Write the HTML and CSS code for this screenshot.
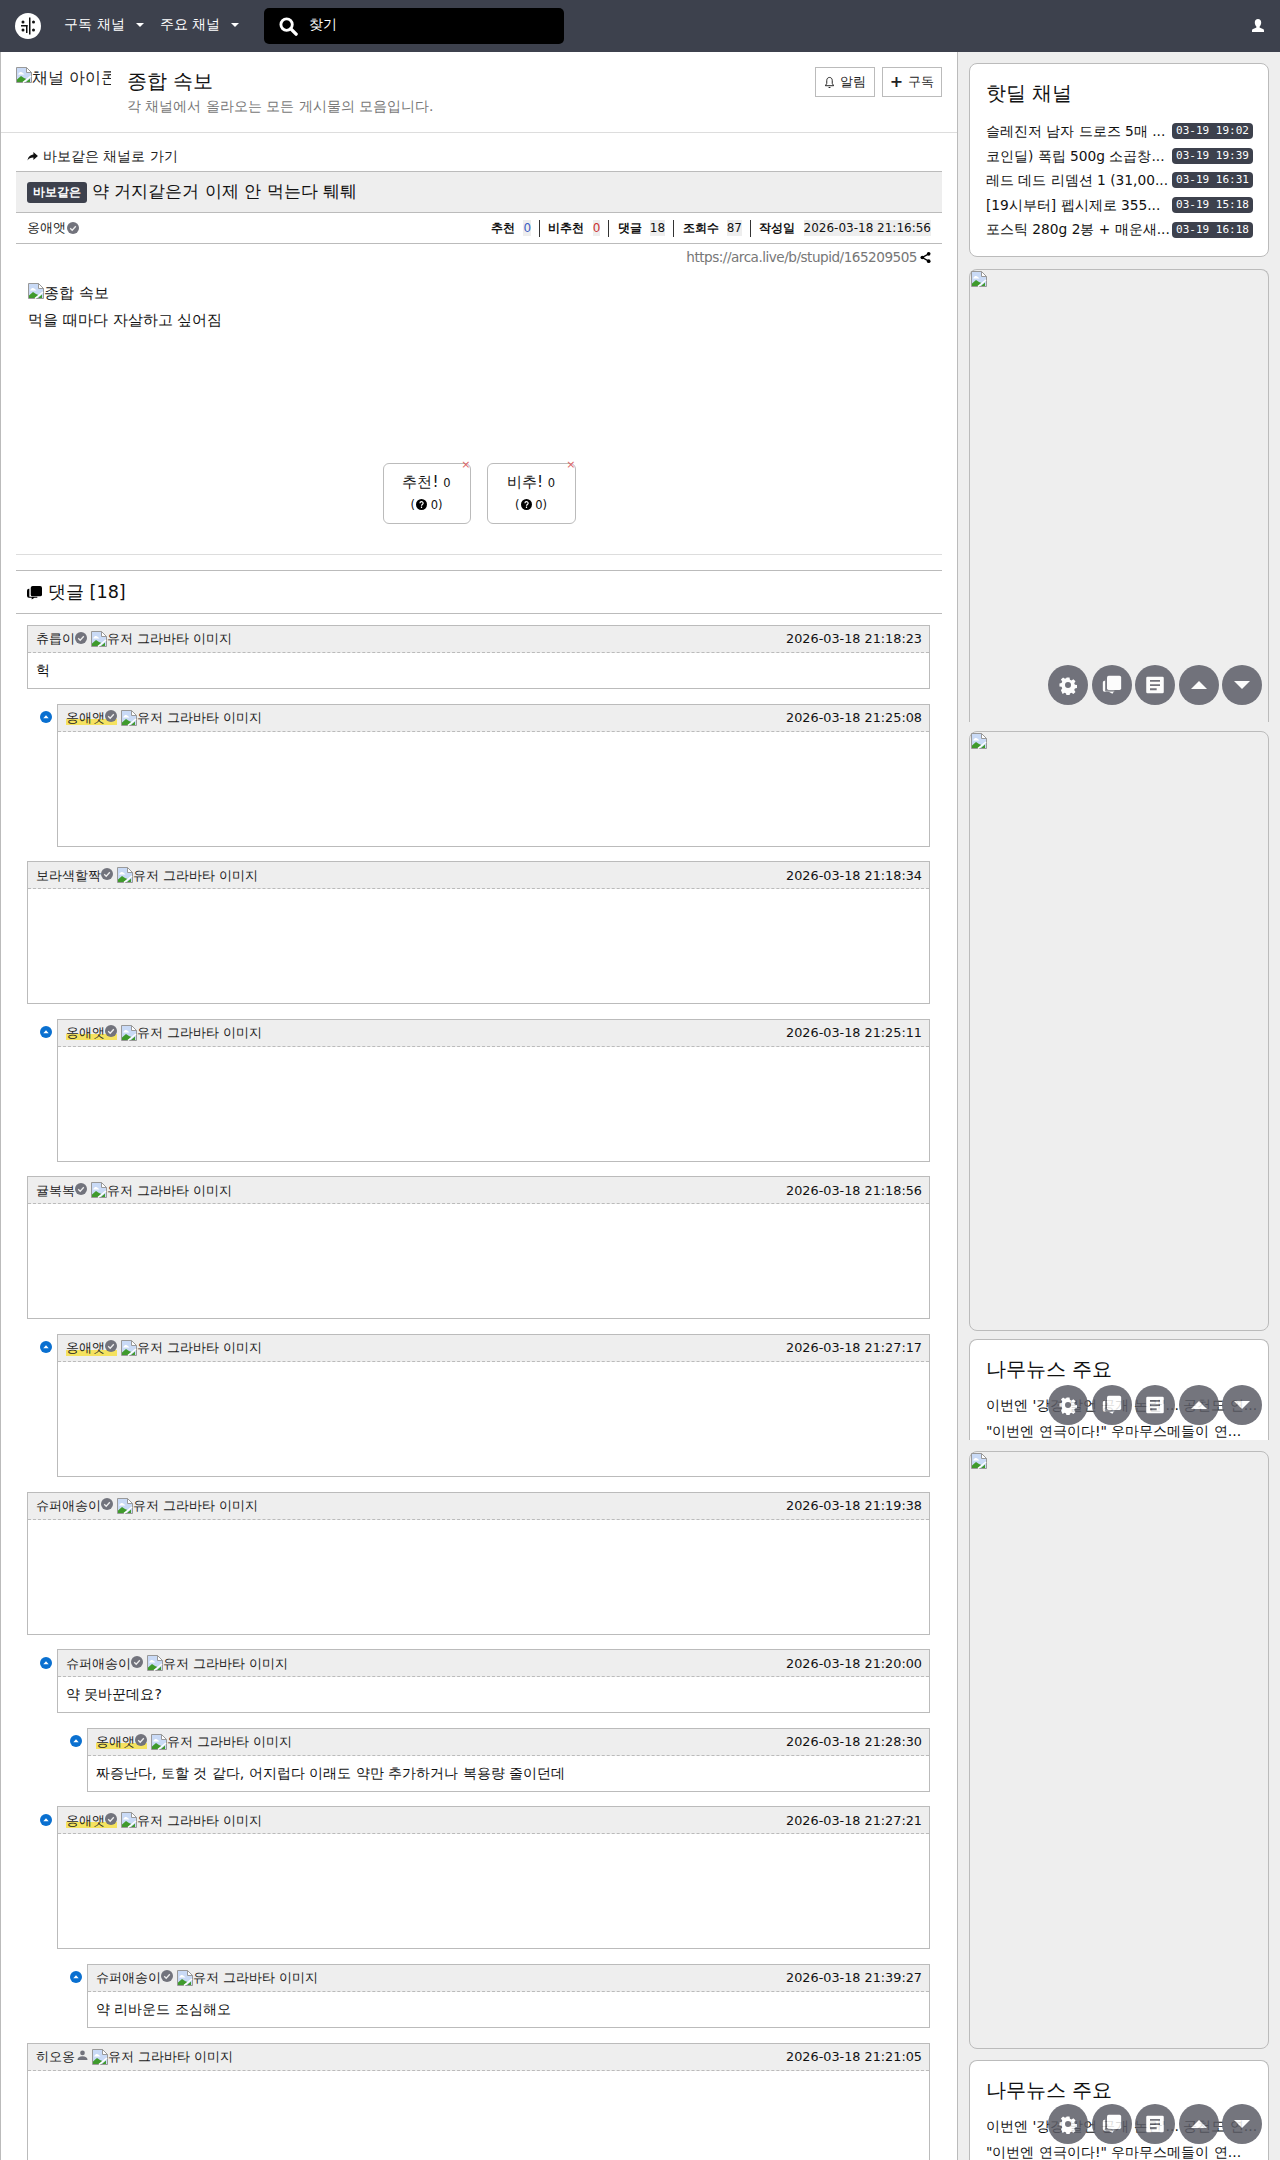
FILE: index.html
```html
<!DOCTYPE html>
<html lang="ko">
<head>
<meta charset="utf-8">
<title>약 거지같은거 이제 안 먹는다 퉤퉤</title>
<link rel="stylesheet" href="styles.css">
</head>
<body>
<svg class="defs" width="0" height="0" aria-hidden="true">
  <symbol id="broken" viewBox="0 0 16 16">
    <path d="M.5.5h10l5 5v10H.5z" fill="#c9daf6" stroke="#999"/>
    <path d="M10.500.5v5h5z" fill="#fff" stroke="#999"/>
    <path d="M2 7.500c1-2 2-2.500 3-2.500s2 1 3.500 2.500z" fill="#fff"/>
    <path d="M1 15V12.500l4-3.500 3 2 2.500 1L7 15z" fill="#3f9a2c"/>
    <path d="M10 15l4-3.500V15z" fill="#3f9a2c"/>
    <path d="M7 15.500l8-6.500" stroke="#fff" stroke-width="1.500"/>
  </symbol>
  <symbol id="check" viewBox="0 0 12 12">
    <circle cx="6" cy="6" r="6" fill="#72737c"/>
    <path d="M3.200 6.200l2 2 3.600-4" fill="none" stroke="#eee" stroke-width="1.300"/>
  </symbol>
  <symbol id="reply" viewBox="0 0 12 12">
    <circle cx="6" cy="6" r="6" fill="#0a70d0"/>
    <path d="M3.300 7.300L6 4.200l2.700 3.100z" fill="#fff"/>
  </symbol>
  <symbol id="gear" viewBox="0 0 24 24">
    <path fill-rule="evenodd" fill="#fff" d="M10 2h4l.6 3 2 .9 2.600-1.700 2.800 2.800-1.700 2.600.9 2 2.800.4v4l-2.800.6-.9 2 1.700 2.600-2.800 2.800-2.600-1.700-2 .9-.6 2.800h-4l-.6-2.800-2-.9-2.600 1.700L2.600 19l1.700-2.600-.9-2L.6 14v-4l2.800-.6.900-2L2.600 4.800 5.400 2l2.600 1.700 2-.9zM12 8a4 4 0 100 8 4 4 0 000-8z" transform="translate(1.200 1.200) scale(.9)"/>
  </symbol>
  <symbol id="chat" viewBox="0 0 24 24">
    <path fill="#fff" d="M8 1h13a2 2 0 012 2v13a2 2 0 01-2 2H8a2 2 0 01-2-2V3a2 2 0 012-2z"/>
    <path fill="#fff" d="M4 7v12h11l-2.500 3.500L8 20H3a2 2 0 01-2-2V9a2 2 0 012-2z"/>
    <path fill="none" stroke="#72737c" d="M4.500 5v14.500H16"/>
  </symbol>
  <symbol id="doc" viewBox="0 0 24 24">
    <path fill="#fff" fill-rule="evenodd" d="M3 2h18a1.500 1.500 0 011.500 1.500v17A1.500 1.500 0 0121 22H3a1.500 1.500 0 01-1.500-1.500v-17A1.500 1.500 0 013 2zm3 4v2.200h12V6zm0 5v2.200h12V11zm0 5v2.200h8V16z"/>
  </symbol>
  <symbol id="help" viewBox="0 0 12 12">
    <circle cx="6" cy="6" r="6"/>
    <path d="M4.300 4.700c0-2.300 3.500-2.300 3.500-.1 0 1.300-1.800 1.300-1.800 2.700M6 8.300v1.500" fill="none" stroke="#fff" stroke-width="1.300"/>
  </symbol>
</svg>

<header class="topbar">
  <a class="logo" aria-label="아카라이브">
    <svg viewBox="0 0 26 26" width="26" height="26">
      <circle cx="13" cy="13" r="13" fill="#fff"/>
      <g fill="#111">
        <rect x="6.500" y="7.500" width="3" height="3" rx="1.500"/>
        <rect x="6.500" y="15.500" width="3" height="3" rx="1.500"/>
        <rect x="17" y="7.500" width="3" height="3" rx="1.500"/>
        <rect x="17" y="15.500" width="3" height="3" rx="1.500"/>
        <rect x="14" y="4.500" width="1.500" height="17"/>
        <rect x="11" y="12" width="1.500" height="8"/>
        <rect x="6" y="12" width="6.500" height="1.500"/>
      </g>
    </svg>
  </a>
  <nav class="topnav">
    <a class="topnav-item">구독 채널<i class="caret"></i></a>
    <a class="topnav-item">주요 채널<i class="caret"></i></a>
  </nav>
  <div class="search">
    <svg viewBox="0 0 20 20" width="19" height="19"><circle cx="8" cy="8" r="6" fill="none" stroke="#fff" stroke-width="3"/><path d="M12.500 12.500l5.500 5.500" stroke="#fff" stroke-width="3.600" stroke-linecap="round"/></svg>
    <span>찾기</span>
  </div>
  <a class="user" aria-label="사용자">
    <svg viewBox="0 0 16 16" width="16" height="16"><path fill="#fff" d="M8 1c2 0 3.200 1.500 3.200 3.500 0 1.700-.7 3.200-1.500 4-.3.400-.2 1 .3 1.200l3 1.300c.8.400 1 1 1 2V14H2v-1c0-1 .2-1.600 1-2l3-1.300c.5-.2.600-.8.300-1.200-.8-.8-1.500-2.300-1.500-4C4.800 2.500 6 1 8 1z"/></svg>
  </a>
</header>

<div class="layout">
  <main class="main">
    <section class="channel">
      <div class="channel-icon"><svg class="bi"><use href="#broken"/></svg>채널 아이콘</div>
      <div class="channel-text">
        <h1>종합 속보</h1>
        <p>각 채널에서 올라오는 모든 게시물의 모음입니다.</p>
      </div>
      <div class="channel-actions">
        <a class="btn"><svg viewBox="0 0 12 14" width="11" height="13"><path fill="none" stroke="#111" d="M6 1.500c-2 0-3 1.500-3 3.500v3l-1.500 2.500h9L9 8V5c0-2-1-3.500-3-3.500z"/><path d="M5 12h2v1H5z" fill="#111"/></svg>알림</a>
        <a class="btn"><span class="plus">+</span>구독</a>
      </div>
    </section>

    <article class="article">
      <a class="back"><svg viewBox="0 0 12 10" width="11" height="9"><path fill="#111" d="M7 0l5 4.500L7 9V6.200C4 6.200 2 7 .5 9.500 1 6 3 3.200 7 2.800z"/></svg>바보같은 채널로 가기</a>
      <div class="title-bar"><span class="badge">바보같은</span><h2>약 거지같은거 이제 안 먹는다 퉤퉤</h2></div>
      <div class="meta">
        <span class="author">옹애앳<svg class="ck"><use href="#check"/></svg></span>
        <div class="stats">
          <b>추천</b><span class="val blue">0</span><i></i>
          <b>비추천</b><span class="val red">0</span><i></i>
          <b>댓글</b><span class="val">18</span><i></i>
          <b>조회수</b><span class="val">87</span><i></i>
          <b>작성일</b><span class="val">2026-03-18 21:16:56</span>
        </div>
      </div>
      <div class="url">https://arca.live/b/stupid/165209505<svg viewBox="0 0 12 12" width="11" height="11"><circle cx="9.500" cy="2" r="2"/><circle cx="9.500" cy="10" r="2"/><circle cx="2.500" cy="6" r="2"/><path d="M9.500 2l-7 4 7 4" fill="none" stroke="#000" stroke-width="1.500"/></svg></div>
      <div class="body">
        <div class="body-img"><svg class="bi"><use href="#broken"/></svg>종합 속보</div>
        <p>먹을 때마다 자살하고 싶어짐</p>
      </div>
      <div class="votes">
        <a class="vote"><span class="vote-x">×</span><span class="vote-main">추천! <small>0</small></span><span class="vote-sub">(<svg class="help"><use href="#help"/></svg> 0)</span></a>
        <a class="vote wide"><span class="vote-x">×</span><span class="vote-main">비추! <small>0</small></span><span class="vote-sub">(<svg class="help"><use href="#help"/></svg> 0)</span></a>
      </div>
      <hr class="rule">
      <h3 class="comments-title"><svg viewBox="0 0 16 16" width="15" height="15"><path d="M6 1h8a2 2 0 012 2v7a2 2 0 01-2 2H6a2 2 0 01-2-2V3a2 2 0 012-2z"/><path d="M2.500 4v8.500H11v1H8l-3 2v-2H2a2 2 0 01-2-2V6a2 2 0 012-2z"/></svg>댓글 [18]</h3>

      <div class="comments">
        <div class="c"><div class="c-box">
          <div class="c-head"><span class="c-name">츄릅이</span><svg class="ck"><use href="#check"/></svg><span class="c-ava"><svg class="bi"><use href="#broken"/></svg>유저 그라바타 이미지</span><time>2026-03-18 21:18:23</time></div>
          <div class="c-text">헉</div></div></div>

        <div class="c d1"><svg class="c-rep"><use href="#reply"/></svg><div class="c-box">
          <div class="c-head"><span class="c-name op">옹애앳<svg class="ck"><use href="#check"/></svg></span><span class="c-ava"><svg class="bi"><use href="#broken"/></svg>유저 그라바타 이미지</span><time>2026-03-18 21:25:08</time></div>
          <div class="c-pic"></div></div></div>

        <div class="c"><div class="c-box">
          <div class="c-head"><span class="c-name">보라색할짝</span><svg class="ck"><use href="#check"/></svg><span class="c-ava"><svg class="bi"><use href="#broken"/></svg>유저 그라바타 이미지</span><time>2026-03-18 21:18:34</time></div>
          <div class="c-pic"></div></div></div>

        <div class="c d1"><svg class="c-rep"><use href="#reply"/></svg><div class="c-box">
          <div class="c-head"><span class="c-name op">옹애앳<svg class="ck"><use href="#check"/></svg></span><span class="c-ava"><svg class="bi"><use href="#broken"/></svg>유저 그라바타 이미지</span><time>2026-03-18 21:25:11</time></div>
          <div class="c-pic"></div></div></div>

        <div class="c"><div class="c-box">
          <div class="c-head"><span class="c-name">귤복복</span><svg class="ck"><use href="#check"/></svg><span class="c-ava"><svg class="bi"><use href="#broken"/></svg>유저 그라바타 이미지</span><time>2026-03-18 21:18:56</time></div>
          <div class="c-pic"></div></div></div>

        <div class="c d1"><svg class="c-rep"><use href="#reply"/></svg><div class="c-box">
          <div class="c-head"><span class="c-name op">옹애앳<svg class="ck"><use href="#check"/></svg></span><span class="c-ava"><svg class="bi"><use href="#broken"/></svg>유저 그라바타 이미지</span><time>2026-03-18 21:27:17</time></div>
          <div class="c-pic"></div></div></div>

        <div class="c"><div class="c-box">
          <div class="c-head"><span class="c-name">슈퍼애송이</span><svg class="ck"><use href="#check"/></svg><span class="c-ava"><svg class="bi"><use href="#broken"/></svg>유저 그라바타 이미지</span><time>2026-03-18 21:19:38</time></div>
          <div class="c-pic"></div></div></div>

        <div class="c d1"><svg class="c-rep"><use href="#reply"/></svg><div class="c-box">
          <div class="c-head"><span class="c-name">슈퍼애송이</span><svg class="ck"><use href="#check"/></svg><span class="c-ava"><svg class="bi"><use href="#broken"/></svg>유저 그라바타 이미지</span><time>2026-03-18 21:20:00</time></div>
          <div class="c-text">약 못바꾼데요?</div></div></div>

        <div class="c d2"><svg class="c-rep"><use href="#reply"/></svg><div class="c-box">
          <div class="c-head"><span class="c-name op">옹애앳<svg class="ck"><use href="#check"/></svg></span><span class="c-ava"><svg class="bi"><use href="#broken"/></svg>유저 그라바타 이미지</span><time>2026-03-18 21:28:30</time></div>
          <div class="c-text">짜증난다, 토할 것 같다, 어지럽다 이래도 약만 추가하거나 복용량 줄이던데</div></div></div>

        <div class="c d1"><svg class="c-rep"><use href="#reply"/></svg><div class="c-box">
          <div class="c-head"><span class="c-name op">옹애앳<svg class="ck"><use href="#check"/></svg></span><span class="c-ava"><svg class="bi"><use href="#broken"/></svg>유저 그라바타 이미지</span><time>2026-03-18 21:27:21</time></div>
          <div class="c-pic"></div></div></div>

        <div class="c d2"><svg class="c-rep"><use href="#reply"/></svg><div class="c-box">
          <div class="c-head"><span class="c-name">슈퍼애송이</span><svg class="ck"><use href="#check"/></svg><span class="c-ava"><svg class="bi"><use href="#broken"/></svg>유저 그라바타 이미지</span><time>2026-03-18 21:39:27</time></div>
          <div class="c-text">약 리바운드 조심해오</div></div></div>

        <div class="c"><div class="c-box">
          <div class="c-head"><span class="c-name">히오옹</span><svg class="person" viewBox="0 0 12 12"><circle cx="6" cy="3.500" r="2.800"/><path d="M0 12c0-3 2.500-4.500 6-4.500s6 1.500 6 4.500z"/></svg><span class="c-ava"><svg class="bi"><use href="#broken"/></svg>유저 그라바타 이미지</span><time>2026-03-18 21:21:05</time></div>
          <div class="c-pic"></div></div></div>
      </div>
    </article>
  </main>

  <aside class="side">
    <section class="card deal">
      <h4>핫딜 채널</h4>
      <ul class="deal-list">
        <li><span>슬레진저 남자 드로즈 5매 ...</span><time>03-19 19:02</time></li>
        <li><span>코인딜) 폭립 500g 소곱창...</span><time>03-19 19:39</time></li>
        <li><span>레드 데드 리뎀션 1 (31,00...</span><time>03-19 16:31</time></li>
        <li><span>[19시부터] 펩시제로 355...</span><time>03-19 15:18</time></li>
        <li><span>포스틱 280g 2봉 + 매운새...</span><time>03-19 16:18</time></li>
      </ul>
    </section>

    <section class="card ad ad-a">
      <svg class="bi"><use href="#broken"/></svg>
      <div class="fab-row fab-a">
        <a class="fab"><svg><use href="#gear"/></svg></a><a class="fab"><svg><use href="#chat"/></svg></a><a class="fab"><svg><use href="#doc"/></svg></a><a class="fab"><i class="tri up"></i></a><a class="fab"><i class="tri down"></i></a>
      </div>
    </section>

    <section class="card ad ad-b"><svg class="bi"><use href="#broken"/></svg></section>

    <section class="card news">
      <h4>나무뉴스 주요</h4>
      <p>이번엔 '강경 발언 공개 논란'... 공천도 연...</p>
      <p>"이번엔 연극이다!" 우마무스메들이 연...</p>
      <div class="fab-row fab-n">
        <a class="fab"><svg><use href="#gear"/></svg></a><a class="fab"><svg><use href="#chat"/></svg></a><a class="fab"><svg><use href="#doc"/></svg></a><a class="fab"><i class="tri up"></i></a><a class="fab"><i class="tri down"></i></a>
      </div>
    </section>

    <section class="card ad ad-b ad-c"><svg class="bi"><use href="#broken"/></svg></section>

    <section class="card news">
      <h4>나무뉴스 주요</h4>
      <p>이번엔 '강경 발언 공개 논란'... 공천도 연...</p>
      <p>"이번엔 연극이다!" 우마무스메들이 연...</p>
      <div class="fab-row fab-l">
        <a class="fab"><svg><use href="#gear"/></svg></a><a class="fab"><svg><use href="#chat"/></svg></a><a class="fab"><svg><use href="#doc"/></svg></a><a class="fab"><i class="tri up"></i></a><a class="fab"><i class="tri down"></i></a>
      </div>
    </section>
  </aside>
</div>
</body>
</html>
```

FILE: styles.css
```css
* { box-sizing: border-box; }
html, body { margin: 0; padding: 0; }
body {
  height: 2160px;
  overflow: hidden;
  background: #eee;
  color: #111;
  font-family: "DejaVu Sans", sans-serif;
  font-size: 14px;
  line-height: 1.5;
}
h1, h2, h3, h4, p, ul { margin: 0; padding: 0; font-weight: 400; }
.defs { position: absolute; }
.bi { width: 16px; height: 16px; flex: none; vertical-align: top; }
.ck { width: 12px; height: 12px; flex: none; margin-bottom: 3px; }

.topbar {
  display: flex;
  align-items: center;
  height: 52px;
  background: #3d414d;
  padding-left: 15px;
  color: #fff;
}
.logo { display: flex; width: 26px; height: 26px; margin-right: 23px; }
.topnav { display: flex; gap: 16px; font-size: 14.400px; padding-bottom: 2px; }
.topnav-item { display: flex; align-items: center; }
.caret {
  margin-left: 11px;
  border-left: 4px solid transparent;
  border-right: 4px solid transparent;
  border-top: 4px solid #fff;
}
.search {
  display: flex;
  align-items: center;
  gap: 11px;
  width: 300px;
  height: 36px;
  margin-left: 25px;
  padding-left: 15px;
  background: #000;
  border-radius: 5px;
  font-size: 14.400px;
}
.search span { padding-bottom: 2px; }
.user { display: flex; margin-left: auto; margin-right: 14px; }

.layout { display: flex; height: 2108px; }
.main {
  width: 958px;
  flex: none;
  background: #fff;
  border-left: 1px solid #bbb;
  border-right: 1px solid #bbb;
}

.channel {
  display: flex;
  height: 81px;
  padding: 11px 15px 0 15px;
  border-bottom: 1px solid #ddd;
}
.channel-icon {
  display: flex;
  width: 95px;
  height: 30px;
  padding-top: 4px;
  overflow: hidden;
  font-size: 16px;
  line-height: 22px;
  color: #222;
  white-space: nowrap;
  margin-right: 16px;
}
.channel-text h1 { font-size: 20px; line-height: 28px; margin-top: 4px; }
.channel-text p { font-size: 13.900px; color: #777; line-height: 22px; }
.channel-actions { display: flex; gap: 7px; margin-left: auto; margin-top: 4px; }
.btn {
  display: flex;
  align-items: center;
  justify-content: center;
  gap: 5px;
  width: 60px;
  height: 30px;
  border: 1px solid #bbb;
  font-size: 12.800px;
  color: #222;
}
.plus { font-size: 16px; font-weight: 700; line-height: 1; }

.article { padding: 0 15px 0 15px; }
.back {
  display: flex;
  align-items: center;
  gap: 5px;
  height: 38px;
  padding: 8px 0 0 11px;
  font-size: 13.900px;
  color: #222;
}
.title-bar {
  display: flex;
  align-items: center;
  gap: 5px;
  height: 42px;
  padding-left: 11px;
  background: #eee;
  border-top: 1px solid #bbb;
  border-bottom: 1px solid #bbb;
}
.badge {
  padding: 0 6px;
  height: 21px;
  line-height: 21px;
  font-size: 12px;
  font-weight: 700;
  color: #fff;
  background: #3d414d;
  border-radius: 3px;
}
.title-bar h2 { font-size: 17px; line-height: 23px; padding-bottom: 2px; }
.meta {
  display: flex;
  align-items: center;
  justify-content: space-between;
  height: 31px;
  padding: 0 11px;
  border-bottom: 1px solid #bbb;
}
.author { display: flex; align-items: center; gap: 1px; font-size: 13px; color: #222; }
.author .ck { margin-bottom: 0; }
.stats { display: flex; align-items: center; font-size: 12px; line-height: 16px; }
.stats b { font-size: 11.500px; font-weight: 700; margin-right: 8.200px; }
.stats i { width: 1px; height: 17px; background: #333; margin: 0 8.200px; }
.val { background: #eee; }
.blue { color: #3d5fc4; }
.red { color: #c33; }
.url {
  display: flex;
  justify-content: flex-end;
  align-items: center;
  gap: 3px;
  padding-right: 11px;
  height: 26px;
  font-size: 13.600px;
  letter-spacing: -0.5px;
  color: #777;
}
.body { padding: 13px 12px 0; font-size: 15px; height: 193px; }
.body-img { display: flex; line-height: 21px; }
.body p { margin-top: 6px; line-height: 21px; }

.votes { display: flex; justify-content: center; gap: 16px; }
.vote {
  position: relative;
  display: flex;
  flex-direction: column;
  align-items: center;
  width: 88px;
  height: 61px;
  padding-top: 6px;
  border: 1px solid #bbb;
  border-radius: 6px;
}
.vote.wide { width: 89px; }
.vote-x { position: absolute; top: -6px; right: -1px; color: #d66; font-size: 11px; line-height: 14px; }
.vote-main { font-size: 15.200px; line-height: 24px; }
.vote-main small { font-size: 11.500px; }
.vote-sub { font-size: 11.500px; line-height: 21px; }
.help { width: 11px; height: 11px; vertical-align: -1px; margin-left: 1px; }

.rule { margin: 30px 0 15px; border: 0; border-top: 1px solid #ddd; }
.comments-title {
  display: flex;
  align-items: center;
  gap: 6px;
  height: 44px;
  padding-left: 11px;
  font-size: 17.600px;
  border-top: 1px solid #bbb;
  border-bottom: 1px solid #bbb;
}

.comments { display: flex; flex-direction: column; gap: 14.600px; padding: 11px 12px 0 11px; }
.c { display: flex; }
.c-rep { width: 12px; height: 12px; flex: none; margin: 7.500px 5.500px 0 12.500px; }
.d2 { margin-left: 30px; }
.c-box { flex: 1; border: 1px solid #bbb; }
.c-head {
  display: flex;
  align-items: center;
  height: 27px;
  padding: 0 7px 0 8px;
  background: #eee;
  border-bottom: 1px dashed #bbb;
  font-size: 12.800px;
  color: #222;
}
.c-name { display: flex; align-items: center; }
.c-name.op { background: linear-gradient(transparent 60%, #f5e25f 60%, #f5e25f 88%, transparent 88%); }
.c-ava { display: flex; align-items: center; margin-left: 4px; }
.c-head time { margin-left: auto; color: #111; }
.c-text { height: 35px; padding: 0 8px; line-height: 35px; font-size: 14px; }
.c-pic { height: 114px; }
.person { width: 11px; height: 10px; margin: 0 0 3px 2px; fill: #72737c; }

.side { flex: 1; display: flex; flex-direction: column; padding: 11px 11px 0 11px; }
.card {
  position: relative;
  flex: none;
  width: 300px;
  border: 1px solid #bbb;
  border-radius: 8px 8px 0 0;
  background: #fff;
}
.deal { height: 194px; border-radius: 8px; padding: 15px 15px 0 16px; margin-bottom: 12px; }
.card h4 { font-size: 20px; line-height: 28px; }
.deal-list { list-style: none; margin-top: 12px; }
.deal-list li { display: flex; justify-content: space-between; align-items: center; height: 24.600px; font-size: 13.760px; white-space: nowrap; }
.deal-list time {
  flex: none;
  width: 81px;
  height: 16px;
  line-height: 16px;
  text-align: center;
  font-family: "DejaVu Sans Mono", monospace;
  font-size: 11px;
  color: #fff;
  background: #3d414d;
  border-radius: 4px;
}
.ad { background: #eee; border-bottom: 0; padding: 1px; }
.ad-a { height: 453px; margin-bottom: 9px; }
.ad-b { height: 600px; border-bottom: 1px solid #bbb; margin-bottom: 8px; border-radius: 8px; }
.ad-c { height: 598px; margin-bottom: 11px; }
.ad .bi { display: block; }
.news { height: 101px; border-bottom: 0; padding: 15px 15px 0 16px; margin-bottom: 11px; font-size: 14px; }
.news p { line-height: 26px; white-space: nowrap; }
.news h4 { margin-bottom: 9px; }

.fab-row { position: absolute; display: flex; gap: 3.500px; right: 6px; }
.fab-a { bottom: 17px; }
.fab-n { top: 45px; }
.fab-l { top: 43px; }
.fab {
  display: flex;
  align-items: center;
  justify-content: center;
  width: 40px;
  height: 40px;
  border-radius: 50%;
  background: #5c5d67;
  opacity: .85;
}
.fab svg { width: 20px; height: 20px; }
.tri { border-left: 8px solid transparent; border-right: 8px solid transparent; }
.tri.up { border-bottom: 8px solid #fff; }
.tri.down { border-top: 8px solid #fff; }
```
